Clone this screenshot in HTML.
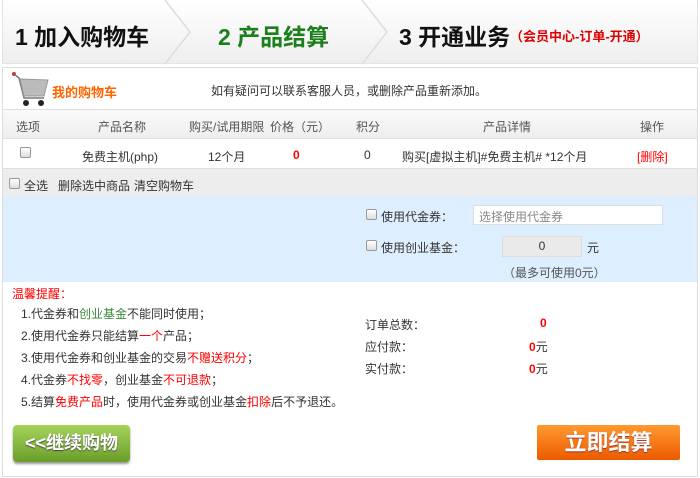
<!DOCTYPE html>
<html><head><meta charset="utf-8"><style>
*{margin:0;padding:0;box-sizing:border-box}
body{width:700px;height:478px;background:#fff;font-family:"Liberation Sans","Noto Sans CJK SC",sans-serif;font-size:12px;color:#333;position:relative;overflow:hidden}
.a{position:absolute;white-space:nowrap}
.cb{position:absolute;width:11px;height:11px;border:1px solid #999;border-radius:2px;background:linear-gradient(#fff,#ddd)}
.r{color:#f00}.g{color:#3a8a3a}
</style></head><body>
<div class="a" style="left:2px;top:0;width:696px;height:64px;background:linear-gradient(#fff,#eeeeee);border:1px solid #e4e4e4;border-top:none"></div>
<svg class="a" style="left:0;top:0" width="700" height="66"><polyline points="165,0 190,32 165,64" fill="none" stroke="#ddd" stroke-width="1.5"/><polyline points="362,0 387,32 362,64" fill="none" stroke="#ddd" stroke-width="1.5"/></svg>
<div class="a" style="left:15px;top:18px;font-size:23px;font-weight:bold;color:#111">1 加入购物车</div>
<div class="a" style="left:218px;top:18px;font-size:23px;font-weight:bold;color:#1b7f1b">2 产品结算</div>
<div class="a" style="left:399px;top:18px;font-size:23px;font-weight:bold;color:#111">3 开通业务</div>
<div class="a" style="left:510px;top:26px;font-size:13px;font-weight:bold;color:#d00">（会员中心-订单-开通）</div>
<div class="a" style="left:2px;top:67px;width:696px;height:410px;border:1px solid #ddd"></div>
<svg class="a" style="left:10px;top:70px" width="45" height="38"><circle cx="4" cy="4" r="2" fill="#c33"/><path d="M4 4 L9 8 L14 28 L34 28" fill="none" stroke="#777" stroke-width="1.5"/><path d="M10 9 L38 10 L34 26 L14 26 Z" fill="#bbb" stroke="#999"/><circle cx="16" cy="33" r="3" fill="#222"/><circle cx="31" cy="33" r="3" fill="#222"/></svg>
<div class="a" style="left:52px;top:82px;font-size:13px;font-weight:bold;color:#f60">我的购物车</div>
<div class="a" style="left:211px;top:82px">如有疑问可以联系客服人员，或删除产品重新添加。</div>
<div class="a" style="left:3px;top:109px;width:694px;height:30px;background:linear-gradient(#fafafa,#eee);border-top:1px solid #e0e0e0;border-bottom:1px solid #e0e0e0"></div>
<div class="a" style="left:16px;top:118px;color:#555">选项</div>
<div class="a" style="left:98px;top:118px;color:#555">产品名称</div>
<div class="a" style="left:189px;top:118px;color:#555">购买/试用期限</div>
<div class="a" style="left:270px;top:118px;color:#555">价格（元）</div>
<div class="a" style="left:356px;top:118px;color:#555">积分</div>
<div class="a" style="left:483px;top:118px;color:#555">产品详情</div>
<div class="a" style="left:640px;top:118px;color:#555">操作</div>
<div class="cb" style="left:20px;top:147px"></div>
<div class="a" style="left:82px;top:148px">免费主机(php)</div>
<div class="a" style="left:208px;top:148px">12个月</div>
<div class="a r" style="left:293px;top:148px;font-weight:bold">0</div>
<div class="a" style="left:364px;top:148px">0</div>
<div class="a" style="left:402px;top:148px">购买[虚拟主机]#免费主机# *12个月</div>
<div class="a r" style="left:637px;top:148px">[删除]</div>
<div class="a" style="left:3px;top:168px;width:694px;height:28px;background:#ededed;border-top:1px solid #ddd"></div>
<div class="cb" style="left:9px;top:178px"></div>
<div class="a" style="left:24px;top:177px">全选</div>
<div class="a" style="left:58px;top:177px">删除选中商品</div>
<div class="a" style="left:134px;top:177px">清空购物车</div>
<div class="a" style="left:3px;top:196px;width:694px;height:86px;background:#ddeeff"></div>
<div class="cb" style="left:366px;top:209px"></div>
<div class="a" style="left:381px;top:208px">使用代金券：</div>
<div class="a" style="left:473px;top:205px;width:190px;height:20px;background:#fff;border:1px solid #ddd;color:#888;padding:2px 5px">选择使用代金券</div>
<div class="cb" style="left:366px;top:240px"></div>
<div class="a" style="left:381px;top:239px">使用创业基金：</div>
<div class="a" style="left:502px;top:236px;width:80px;height:21px;background:#eaeaea;border:1px solid #ddd;text-align:center;line-height:19px">0</div>
<div class="a" style="left:587px;top:239px">元</div>
<div class="a" style="left:503px;top:264px;color:#555">（最多可使用0元）</div>
<div class="a r" style="left:12px;top:285px">温馨提醒：</div>
<div class="a" style="left:21px;top:305px">1.代金券和<span class="g">创业基金</span>不能同时使用；</div>
<div class="a" style="left:21px;top:327px">2.使用代金券只能结算<span class="r">一个</span>产品；</div>
<div class="a" style="left:21px;top:349px">3.使用代金券和创业基金的交易<span class="r">不赠送积分</span>；</div>
<div class="a" style="left:21px;top:371px">4.代金券<span class="r">不找零</span>，创业基金<span class="r">不可退款</span>；</div>
<div class="a" style="left:21px;top:393px">5.结算<span class="r">免费产品</span>时，使用代金券或创业基金<span class="r">扣除</span>后不予退还。</div>
<div class="a" style="left:365px;top:316px">订单总数：</div>
<div class="a r" style="left:540px;top:316px;font-weight:bold">0</div>
<div class="a" style="left:365px;top:338px">应付款：</div>
<div class="a" style="left:529px;top:338px"><b class="r">0</b>元</div>
<div class="a" style="left:365px;top:360px">实付款：</div>
<div class="a" style="left:529px;top:360px"><b class="r">0</b>元</div>
<div class="a" style="left:13px;top:425px;width:117px;height:37px;border-radius:4px;background:linear-gradient(#a6d35a,#6a9e2a);box-shadow:0 2px 2px #999;color:#fff;font-size:18px;font-weight:bold;line-height:37px;text-align:center;text-shadow:0 1px 1px #444">&lt;&lt;继续购物</div>
<div class="a" style="left:537px;top:425px;width:143px;height:35px;border-radius:2px;background:linear-gradient(#ff9a30,#ec5a00);color:#fff;font-size:22px;font-weight:bold;line-height:35px;text-align:center;text-shadow:0 1px 1px #933">立即结算</div>
</body></html>
